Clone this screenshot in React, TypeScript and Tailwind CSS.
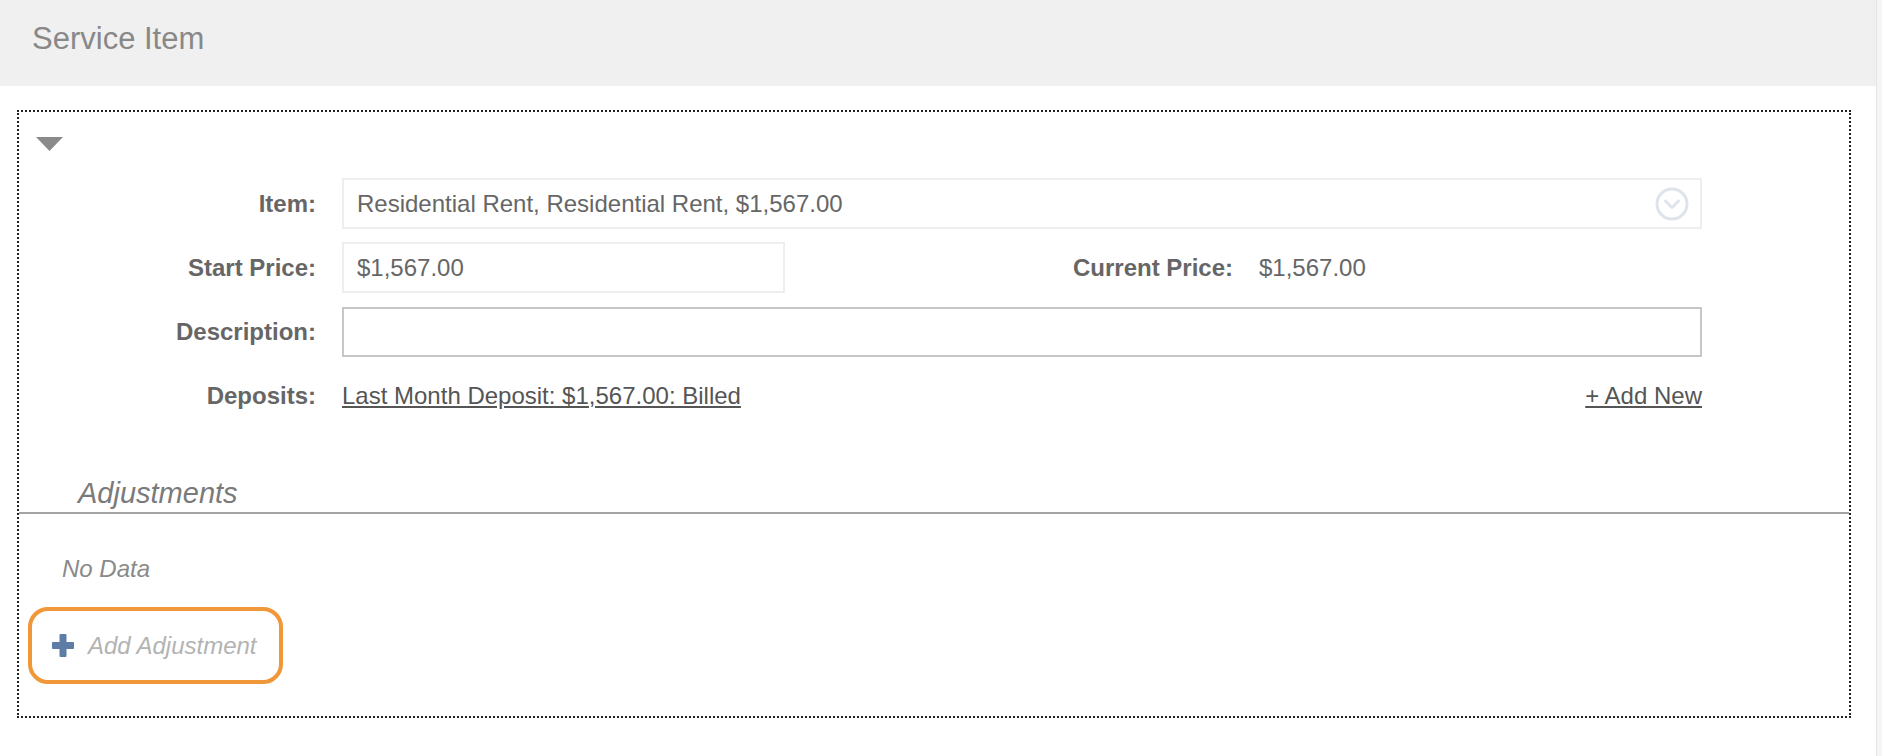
import React from "react";

function ChevronCircle() {
  return (
    <svg width="34" height="34" viewBox="0 0 34 34" fill="none">
      <circle cx="17" cy="17" r="15" stroke="#dfe4ec" strokeWidth="3" />
      <path d="M10.5 14 L17 20.5 L23.5 14" stroke="#dfe4ec" strokeWidth="3" strokeLinecap="round" strokeLinejoin="round" />
    </svg>
  );
}

function PlusIcon() {
  return (
    <svg width="22" height="23" viewBox="0 0 22 23">
      <rect x="7.5" y="0" width="7" height="23" rx="1" fill="#5d7ca6" />
      <rect x="0" y="8" width="22" height="7" rx="1" fill="#5d7ca6" />
    </svg>
  );
}

function Label({ children }: { children: React.ReactNode }) {
  return (
    <div className="w-[297px] shrink-0 text-right font-bold text-[24px] leading-[28px] text-[#666]">
      {children}
    </div>
  );
}

export default function App() {
  return (
    <div className="flex min-h-[756px] w-full bg-white font-['Liberation_Sans',Arial,sans-serif]">
      <div className="flex-1">
        <div className="h-[86px] bg-[#f0f0f0] pl-[32px] pt-[24px] text-[31px] leading-[30px] text-[#888]">
          Service Item
        </div>
        <div className="pl-[17px] pr-[25px] pt-[24px]">
          <div className="h-[608px] border-2 border-dotted border-[#222]">
            <div className="pl-[17px] pt-[25px]">
              <svg width="27" height="14" viewBox="0 0 27 14">
                <path d="M0 0 L27 0 L13.5 14 Z" fill="#8a8a8a" />
              </svg>
            </div>
            <div className="mt-[27px] flex flex-col gap-[13px]">
              <div className="flex h-[51px] items-center">
                <Label>Item:</Label>
                <div className="ml-[26px] flex h-[51px] w-[1360px] items-center justify-between border-2 border-[#eeeeee] pl-[13px] pr-[11px] text-[24px] text-[#666]">
                  <span>Residential Rent, Residential Rent, $1,567.00</span>
                  <ChevronCircle />
                </div>
              </div>
              <div className="flex h-[51px] items-center">
                <Label>Start Price:</Label>
                <div className="ml-[26px] flex h-[51px] w-[443px] items-center border-2 border-[#eeeeee] pl-[13px] text-[24px] text-[#666]">
                  $1,567.00
                </div>
                <div className="w-[448px] text-right font-bold text-[24px] leading-[28px] text-[#666]">
                  Current Price:
                </div>
                <div className="ml-[26px] text-[24px] leading-[28px] text-[#666]">$1,567.00</div>
              </div>
              <div className="flex h-[51px] items-center">
                <Label>Description:</Label>
                <div className="ml-[26px] h-[50px] w-[1360px] border-2 border-[#c6c6c6]" />
              </div>
              <div className="flex h-[51px] items-center">
                <Label>Deposits:</Label>
                <div className="ml-[26px] flex w-[1360px] items-center justify-between text-[24px] leading-[28px] text-[#555]">
                  <span className="underline">Last Month Deposit: $1,567.00: Billed</span>
                  <span className="underline">+ Add New</span>
                </div>
              </div>
            </div>
            <div className="mt-[55px] border-b-2 border-[#a3a3a3] pl-[59px]">
              <div className="h-[36px] text-[29px] italic leading-[34px] text-[#7a7a7a]">Adjustments</div>
            </div>
            <div className="mt-[41px] pl-[43px] text-[24px] italic leading-[28px] text-[#8a8a8a]">No Data</div>
            <div className="ml-[9px] mt-[24px] flex h-[77px] w-[255px] items-center rounded-[20px] border-4 border-[#f0973a] pl-[20px]">
              <PlusIcon />
              <span className="ml-[14px] text-[24px] italic leading-[28px] text-[#b3b3b3]">Add Adjustment</span>
            </div>
          </div>
        </div>
      </div>
      <div className="w-[6px] shrink-0 border-l border-[#e4e4e4] bg-[#f5f5f5]" />
    </div>
  );
}
